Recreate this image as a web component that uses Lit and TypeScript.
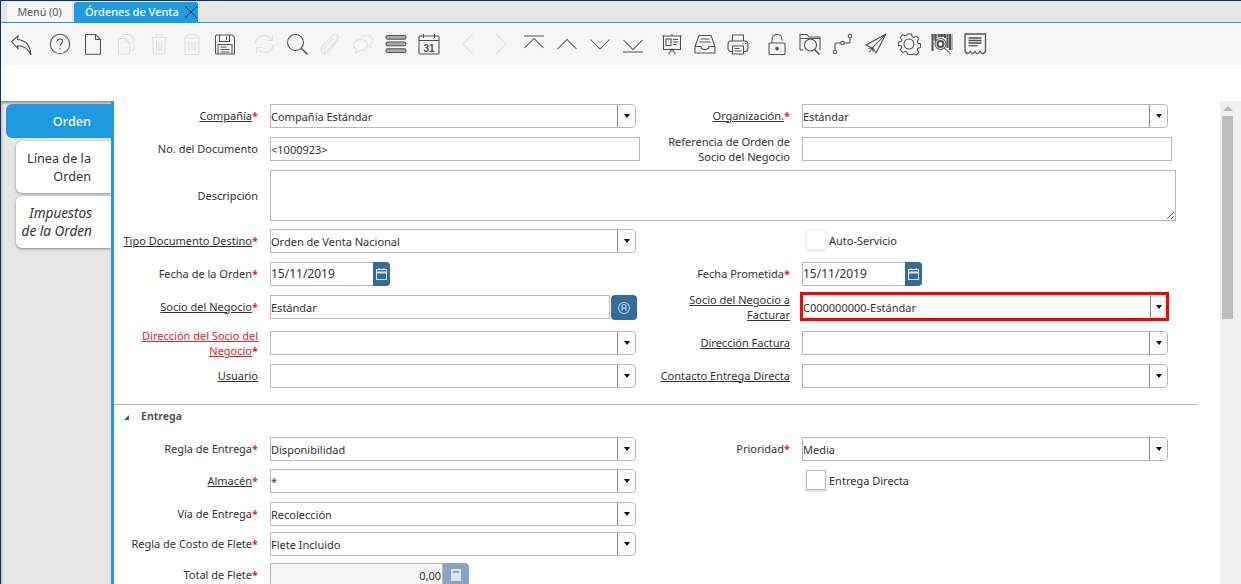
import { LitElement, html, css, svg } from "lit";
import { customElement } from "lit/decorators.js";

const icons: Record<string, any> = {
  back: svg`<path d="M1.500 8.500 8 3l-.5 3.600c7 .4 12.500 4.500 13.500 15.400C18.500 15.500 14 13 7.500 12.800L8 15.500Z"/>`,
  help: svg`<circle cx="11" cy="11" r="9.700"/><path d="M8.300 8.700c0-3.500 5.400-3.500 5.400-.2 0 2.300-2.700 2-2.700 4.800"/><path d="M11 15v1.500"/>`,
  doc: svg`<path d="M3.500 1.500h10l5 5v14a.8.8 0 0 1-.8.8H4.300a.8.8 0 0 1-.8-.8Z"/><path d="M13.500 1.500v5h5"/>`,
  copy: svg`<path d="M8 4V1.500h7l4 4v11a.5.500 0 0 1-.5.500H15"/><path d="M3.500 5.500h7l4 4v11a.5.500 0 0 1-.5.500H4a.5.500 0 0 1-.5-.5Z"/><path d="M10.500 5.500v4h4"/>`,
  trash: svg`<path d="M3 4.500h16M8 4.500V2h6v2.500"/><path d="M4.500 4.500 5.500 21h11l1-16.500"/><path d="M8.500 8v10M11 8v10M13.500 8v10"/>`,
  trash2: svg`<path d="M4 5c0-2 3-3.500 7-3.500S18 3 18 5"/><path d="M4 5v15a1.500 1.500 0 0 0 1.500 1.500h11A1.500 1.500 0 0 0 18 20V5Z"/><path d="M8 8v10M11 8v10M14 8v10"/>`,
  save: svg`<path d="M1.500 3a1 1 0 0 1 1-1h15.500l2.500 2.500V20a1 1 0 0 1-1 1h-17a1 1 0 0 1-1-1Z"/><path d="M5.500 2v6.500h10V2M12.500 3.500v3.500" /><path d="M4 21v-9.500h14V21"/><path d="M6.500 14h6M6.500 16.500h9M6.500 19h9"/>`,
  refresh: svg`<path d="M2.500 11A8.500 8.500 0 0 1 17 5l2.500 2.500M19.500 2v5.500H14"/><path d="M20.500 11A8.500 8.500 0 0 1 6 17l-2.500-2.500M3.500 20v-5.500H9" />`,
  find: svg`<circle cx="9.500" cy="9.500" r="8"/><path d="m15.500 15.500 6 6" stroke-width="1.600"/>`,
  clip: svg`<path d="M19.500 7 9.500 18.500c-2 2.300-4.500 2.500-6.200 1s-1.500-4 .5-6.300L13 3c1.500-1.700 3.700-2 5-.8s1.200 3.300-.3 5L8.700 17c-1 1.100-2.200 1.300-3 .6s-.6-2 .4-3.100l8.400-9.500"/>`,
  chat: svg`<path d="M8.500 6.500C4.500 6.500 1.500 9 1.500 12c0 1.800 1 3.300 2.600 4.300L3.500 20l4-2.500c4.500.5 8-2.200 8-5.500s-3-5.500-7-5.500Z"/><path d="M9 6.200C10 4 12.300 2.500 15 2.500c3.300 0 6 2.200 6 5 0 1.600-.8 3-2.200 4l.6 3-3.400-1.700"/>`,
  grid: svg`<rect x="1" y="2.500" width="20" height="3.700" rx="1.800" fill="#aaa"/><rect x="1" y="9" width="20" height="3.700" rx="1.800" fill="#aaa"/><rect x="1" y="15.800" width="20" height="3.700" rx="1.800" fill="#aaa"/>`,
  cal: svg`<rect x="1" y="3" width="20" height="18" rx="1"/><path d="M1 7.500h20M5.500 1v4M16.500 1v4"/><text x="11" y="18.500" text-anchor="middle" font-size="10" font-weight="600" stroke="none" fill="currentColor" font-family="Liberation Sans, sans-serif">31</text>`,
  prev: svg`<path d="M16 1 6 11l10 10"/>`,
  next: svg`<path d="m6 1 10 10L6 21"/>`,
  first: svg`<path d="M1 3h20M1.500 15 11 5.500l9.500 9.500"/>`,
  up: svg`<path d="M1.500 16 11 6.500l9.500 9.500"/>`,
  down: svg`<path d="M1.500 6.500 11 16l9.500-9.500"/>`,
  last: svg`<path d="M1.500 7 11 16.500 20.500 7M1 19h20"/>`,
  report: svg`<path d="M1 3h20M11 1v2M2.500 3v13.500h17V3"/><rect x="5" y="6" width="5" height="6.500"/><path d="M12 6.500h5M12 9h5M12 11.500h3.500M11 16.500 7.500 21M11 16.500l3.500 4.500"/>`,
  archive: svg`<path d="M5 2.500h12l4 11V20H1v-6.500Z"/><path d="M1 13.500h6c0 4 8 4 8 0h6"/><path d="M6.500 6h9M5.500 9h11"/>`,
  print: svg`<path d="M5.500 8V2h11v6"/><rect x="1" y="8" width="20" height="10.500" rx="3"/><path d="M5.500 13v8h11v-8Z" fill="#f6f6f6"/><path d="M7.500 15.500h5M7.500 18h7"/><path d="M15.500 10.500h1M18 10.500h1"/>`,
  lock: svg`<rect x="3" y="10" width="16" height="11.500" rx="1"/><path d="M6 10V6c0-6 10-6 10 0v1.500"/><circle cx="11" cy="15.500" r="1.300" fill="currentColor"/><path d="M11 16v1.500"/>`,
  zoomacross: svg`<path d="M1 17V1.500h7l2 2.500h11v13"/><path d="M1 5.500h20"/><path d="M1 17h3"/><circle cx="11.500" cy="12" r="6"/><path d="m15.500 16.500 5 5" stroke-width="1.500"/>`,
  wf: svg`<circle cx="3" cy="19" r="1.800"/><circle cx="10.500" cy="10" r="1.800"/><circle cx="18" cy="3" r="1.800"/><path d="M3 17v-6a1 1 0 0 1 1-1h4.700M12.300 10H17a1 1 0 0 0 1-1V5"/>`,
  send: svg`<path d="M21 1 1 12l6 3 14-14-10 19-3-5"/><path d="m4 19 4-4M3.500 15.500 8 15v4"/>`,
  gear: svg`<path d="M9 1h4l.6 2.600 1.800.8 2.400-1.300 2.500 2.900-1.500 2.200.7 1.900 2.500.7v3.600l-2.500.7-.7 1.900 1.500 2.200-2.500 2.900-2.400-1.300-1.800.8L13 21.500H9l-.6-2.400-1.800-.8-2.400 1.300-2.500-2.900 1.500-2.200-.7-1.900L0 12.900V9.300l2.500-.7.700-1.900-1.500-2.200 2.500-2.900 2.400 1.300 1.800-.8Z" transform="translate(.5 0)"/><circle cx="11" cy="11" r="5"/>`,
  barcode: svg`<path d="M1.500 1v17M4.500 1v7M8 1v3M11 1v3M14 1v4M16.500 1v14M19 1v16" stroke-width="2"/><path d="M3 1v6M6 1v4M9.500 1v3M12.500 1v3M21 1v16" stroke-width=".8"/><circle cx="9.500" cy="11" r="5.500" fill="#f6f6f6"/><circle cx="9.500" cy="11" r="3" stroke-width="2"/><path d="m13.500 15 6 6"/>`,
  receipt: svg`<path d="M1 1h20.500v17.500c-2 2.800-4 2.800-5.500 0-1.500 2.800-3.500 2.800-5 0-1.500 2.800-3.500 2.800-5 0-1.500 2.800-3 2.800-5 0Z" stroke-width="1.300"/><path d="M4.500 5h13M4.500 7.500h13M4.500 10h13" stroke-width="1.400"/><path d="M4.500 12.700h9" stroke-width="1.200"/>`,
};

type Tool = { i: string; off?: boolean; gap?: boolean };
const tools: Tool[] = [
  { i: "back" }, { i: "help", gap: true }, { i: "doc" }, { i: "copy", off: true }, { i: "trash", off: true },
  { i: "trash2", off: true }, { i: "save" }, { i: "refresh", off: true, gap: true }, { i: "find" }, { i: "clip", off: true },
  { i: "chat", off: true }, { i: "grid" }, { i: "cal" }, { i: "prev", off: true, gap: true }, { i: "next", off: true },
  { i: "first" }, { i: "up" }, { i: "down" }, { i: "last" }, { i: "report", gap: true }, { i: "archive" }, { i: "print" },
  { i: "lock", gap: true }, { i: "zoomacross" }, { i: "wf" }, { i: "send" }, { i: "gear" }, { i: "barcode" }, { i: "receipt" },
];

const lbl = (text: string, req = false, link = false, red = false, two = false) => html`<div class="lbl ${two ? "two" : ""}">
  <span><span class="${link ? "lk" : ""} ${red ? "redt" : ""}">${text}</span>${req ? html`<span class="star">*</span>` : ""}</span>
</div>`;
const combo = (v = "", cls = "") => html`<div class="combo ${cls}"><span class="val">${v}</span><span class="cbtn"><i></i></span></div>`;
const calIcon = svg`<svg width="13" height="14" viewBox="0 0 13 14" fill="none" stroke="#dfe9f2" stroke-width="1"><rect x="1.500" y="2.500" width="10" height="10"/><path d="M1.500 5.500h10" stroke-width="2"/><path d="M4 1v2M9 1v2"/></svg>`;
const date = (v: string) => html`<div class="date"><span class="val">${v}</span><span class="dbtn">${calIcon}</span></div>`;

@customElement("app-root")
export class AppRoot extends LitElement {
  static styles = css`
    :host {
      display: flex; flex-direction: column; height: 100vh; overflow: hidden; box-sizing: border-box;
      border-top: 1px solid #00386b; border-left: 1px solid #00386b; background: #fff;
      font-family: "Noto Sans", "Open Sans", sans-serif; font-size: 11px; color: #333;
    }
    .tabbar { flex: none; height: 21px; background: #e6e6e6; border-bottom: 1px solid #1e9be0; display: flex; padding-left: 6px; gap: 2px; box-sizing: content-box; }
    .t { margin-top: 1px; height: 20px; line-height: 20px; box-sizing: border-box; font-size: 11px; }
    .t.menu { width: 65px; background: #f7f7f7; text-align: center; color: #555; font-size: 10.700px; }
    .t.cur { width: 124px; background: #1e9be0; color: #fff; border-radius: 3px 3px 0 0; padding-left: 11px; display: flex; font-weight: 500; position: relative; }
    .t.cur svg { position: absolute; right: 0; top: 3px; }
    .toolbar { flex: none; height: 42px; background: #f6f6f6; display: flex; padding: 10px 0 0 3px; box-sizing: border-box; }
    .tool { width: 33px; height: 22px; display: flex; justify-content: center; color: #505050; flex: none; }
    .tool.gap { margin-left: 6px; }
    .tool.off { color: #dedede; }
    .tool svg { width: 22px; height: 22px; fill: none; stroke: currentColor; stroke-width: 1.050; overflow: visible; }
    .spacer { flex: none; height: 36px; }
    .body { flex: 1; min-height: 0; display: flex; }
    .side { flex: none; width: 110px; background: #e6e6e6; box-shadow: inset 1px 3px 3px -1px #8a8a8a; padding: 3px 0 0 5px; box-sizing: border-box; display: flex; flex-direction: column; gap: 3px; align-items: flex-end; }
    .stab { box-sizing: border-box; text-align: right; padding-right: 20px; font-size: 12.700px; line-height: 18px; border-radius: 6px 0 0 6px; color: #333; }
    .stab.on { width: 105px; height: 34px; background: #1e9be0; color: #fff; padding-top: 8px; font-weight: 500; }
    .stab.w { width: 95px; height: 52px; background: #fff; padding-top: 8px; box-shadow: 0 1px 3px #888; }
    .stab.it { font-style: italic; font-size: 13.600px; padding-right: 19px; }
    .main { flex: 1; min-width: 0; border-left: 3px solid #1e9be0; display: flex; }
    .content { flex: 1; min-width: 0; padding-top: 3px; }
    .grid { display: grid; grid-template-columns: 144px 370px 138px 374px; column-gap: 12px; align-items: start; }
    .r1 { grid-template-rows: 33px 33px 59px 33px 33px 36px 33px 24px; }
    .r2 { grid-template-rows: 32px 33px 30px 31px 30px; }
    .lbl { display: flex; align-items: center; justify-content: flex-end; min-height: 24px; box-sizing: border-box; padding-bottom: 2px; text-align: right; line-height: 15px; }
    .lbl.two { margin-top: -3px; }
    .lbl.tall { min-height: 51px; padding-bottom: 0; }
    .lk { text-decoration: underline; }
    .redt { color: #e8212a; }
    .star { color: #e8212a; font-weight: 700; }
    .input, .combo, .date, .area { box-sizing: border-box; border: 1px solid #b8b8b8; height: 24px; background: #fff; line-height: 24px; font-size: 11px; white-space: nowrap; color: #333; }
    .combo { width: 366px; display: flex; border-radius: 0 4px 4px 0; }
    .val { flex: 1; min-width: 0; }
    .cbtn { flex: none; width: 17px; border-left: 1px solid #8c8c8c; background: #fafafa; display: flex; align-items: center; justify-content: center; border-radius: 0 4px 4px 0; }
    .cbtn i { width: 0; height: 0; border: 3.500px solid transparent; border-top: 4px solid #111; border-bottom: 0; }
    .hot { border: 3px solid #f00; border-radius: 0; width: 369px; height: 29px; margin: -3px 0 0 -2px; line-height: 26px; }
    .hot .cbtn { width: 15px; border-radius: 0; }
    .w370 { width: 370px; }
    .area { display: block; grid-column: 2 / span 3; height: 51px; width: 906px; margin: 0; padding: 0; outline: none; border-radius: 0; resize: both; font-family: inherit; }
    .date { width: 120px; display: flex; border-radius: 0 4px 4px 0; line-height: 22px; }
    .date .val { font-size: 12px; }
    .dbtn { flex: none; width: 17px; margin: -1px -1px -1px 0; background: #336b9b; border-radius: 0 4px 4px 0; display: flex; align-items: center; justify-content: center; }
    .bp { display: flex; gap: 1px; align-items: flex-start; width: 367px; }
    .bp .input { flex: 1; }
    .bpbtn { flex: none; width: 26px; height: 25px; background: #336b9b; border-radius: 4px; display: flex; align-items: center; justify-content: center; }
    .chk { display: flex; align-items: center; gap: 3px; padding: 0 0 2px 4px; min-height: 24px; box-sizing: border-box; }
    .box { width: 20px; height: 20px; box-sizing: border-box; background: #fff; }
    .box.dis { border: 1px solid #f0f0f0; box-shadow: 0 1px 2px #ddd; }
    .box.en { border: 1px solid #bbb; box-shadow: 0 1px 2px #ccc; }
    .rule { height: 1px; background: #b5b5b5; margin: 16px 22px 0 0; }
    .sec { display: flex; align-items: center; height: 21px; margin: 0 0 11px 0; padding-left: 10px; font-weight: 700; font-size: 10.500px; color: #555; gap: 12px; }
    .sec i { width: 0; height: 0; border-style: solid; border-width: 0 0 5px 5px; border-color: transparent transparent #1565b8 transparent; margin-top: 3px; }
    .ro { background: #f5f5f5; text-align: right; padding-right: 1px; width: 173px; }
    .amt { display: flex; width: 199px; }
    .amtbtn { flex: none; width: 26px; height: 24px; background: #84a6c4; border-radius: 0 4px 4px 0; display: flex; align-items: center; justify-content: center; }
    .sb { flex: none; width: 21px; background: #f0f0f0; display: flex; flex-direction: column; align-items: flex-start; padding: 4px 0 0 2px; box-sizing: border-box; }
    .sb i { width: 0; height: 0; border: 5px solid transparent; border-bottom: 5px solid #b5b5b5; border-top: 0; margin: 1px 0 5px 1px; }
    .sb b { width: 11px; height: 203px; background: #bdbdbd; }
    .bpbtn svg, .amtbtn svg { display: block; }
  `;

  render() {
    return html`
      <div class="tabbar">
        <div class="t menu">Menú (0)</div>
        <div class="t cur">Órdenes de Venta
          <svg width="14" height="14" viewBox="0 0 14 14" stroke="#0f2a3d" stroke-width="1" fill="none"><path d="m1 1 12 12M13 1 1 13"/></svg>
        </div>
      </div>
      <div class="toolbar">
        ${tools.map((t) => html`<div class="tool ${t.off ? "off" : ""} ${t.gap ? "gap" : ""}"><svg viewBox="0 0 22 22">${icons[t.i]}</svg></div>`)}
      </div>
      <div class="spacer"></div>
      <div class="body">
        <div class="side">
          <div class="stab on">Orden</div>
          <div class="stab w">Línea de la<br />Orden</div>
          <div class="stab w it">Impuestos<br />de la Orden</div>
        </div>
        <div class="main">
          <div class="content">
            <div class="grid r1">
              ${lbl("Compañía", true, true)}${combo("Compañía Estándar")}${lbl("Organización.", true, true)}${combo("Estándar")}
              ${lbl("No. del Documento")}<div class="input w370">&lt;1000923&gt;</div>${lbl("Referencia de Orden de Socio del Negocio", false, false, false, true)}<div class="input w370">&nbsp;</div>
              <div class="lbl tall">Descripción</div><textarea class="area"></textarea>
              ${lbl("Tipo Documento Destino", true, true)}${combo("Orden de Venta Nacional")}<div></div><div class="chk"><span class="box dis"></span>Auto-Servicio</div>
              ${lbl("Fecha de la Orden", true)}${date("15/11/2019")}${lbl("Fecha Prometida", true)}${date("15/11/2019")}
              ${lbl("Socio del Negocio", true, true)}
              <div class="bp"><div class="input">Estándar</div><span class="bpbtn"><svg width="14" height="14" viewBox="0 0 14 14" fill="none" stroke="#b9cde0" stroke-width="1.100"><circle cx="7" cy="7" r="5.500"/><circle cx="7" cy="5.500" r="2"/><path d="M5 7v3M9 7v3"/></svg></span></div>
              ${lbl("Socio del Negocio a Facturar", false, true, false, true)}${combo("C000000000-Estándar", "hot")}
              ${lbl("Dirección del Socio del Negocio", true, true, true, true)}${combo()}${lbl("Dirección Factura", false, true)}${combo()}
              ${lbl("Usuario", false, true)}${combo()}${lbl("Contacto Entrega Directa", false, true)}${combo()}
            </div>
            <div class="rule"></div>
            <div class="sec"><i></i>Entrega</div>
            <div class="grid r2">
              ${lbl("Regla de Entrega", true)}${combo("Disponibilidad")}${lbl("Prioridad", true)}${combo("Media")}
              ${lbl("Almacén", true, true)}${combo("*")}<div></div><div class="chk"><span class="box en"></span>Entrega Directa</div>
              ${lbl("Vía de Entrega", true)}${combo("Recolección")}<div></div><div></div>
              ${lbl("Regla de Costo de Flete", true)}${combo("Flete Incluido")}<div></div><div></div>
              ${lbl("Total de Flete", true)}
              <div class="amt"><div class="input ro">0,00</div><span class="amtbtn"><svg width="12" height="14" viewBox="0 0 12 14" fill="#dbe5ee"><path d="M1 1h10v12H1Z"/><path d="M3 3h6v2H3Z" fill="#84a6c4"/></svg></span></div>
              <div></div><div></div>
            </div>
          </div>
          <div class="sb"><i></i><b></b></div>
        </div>
      </div>
    `;
  }
}
